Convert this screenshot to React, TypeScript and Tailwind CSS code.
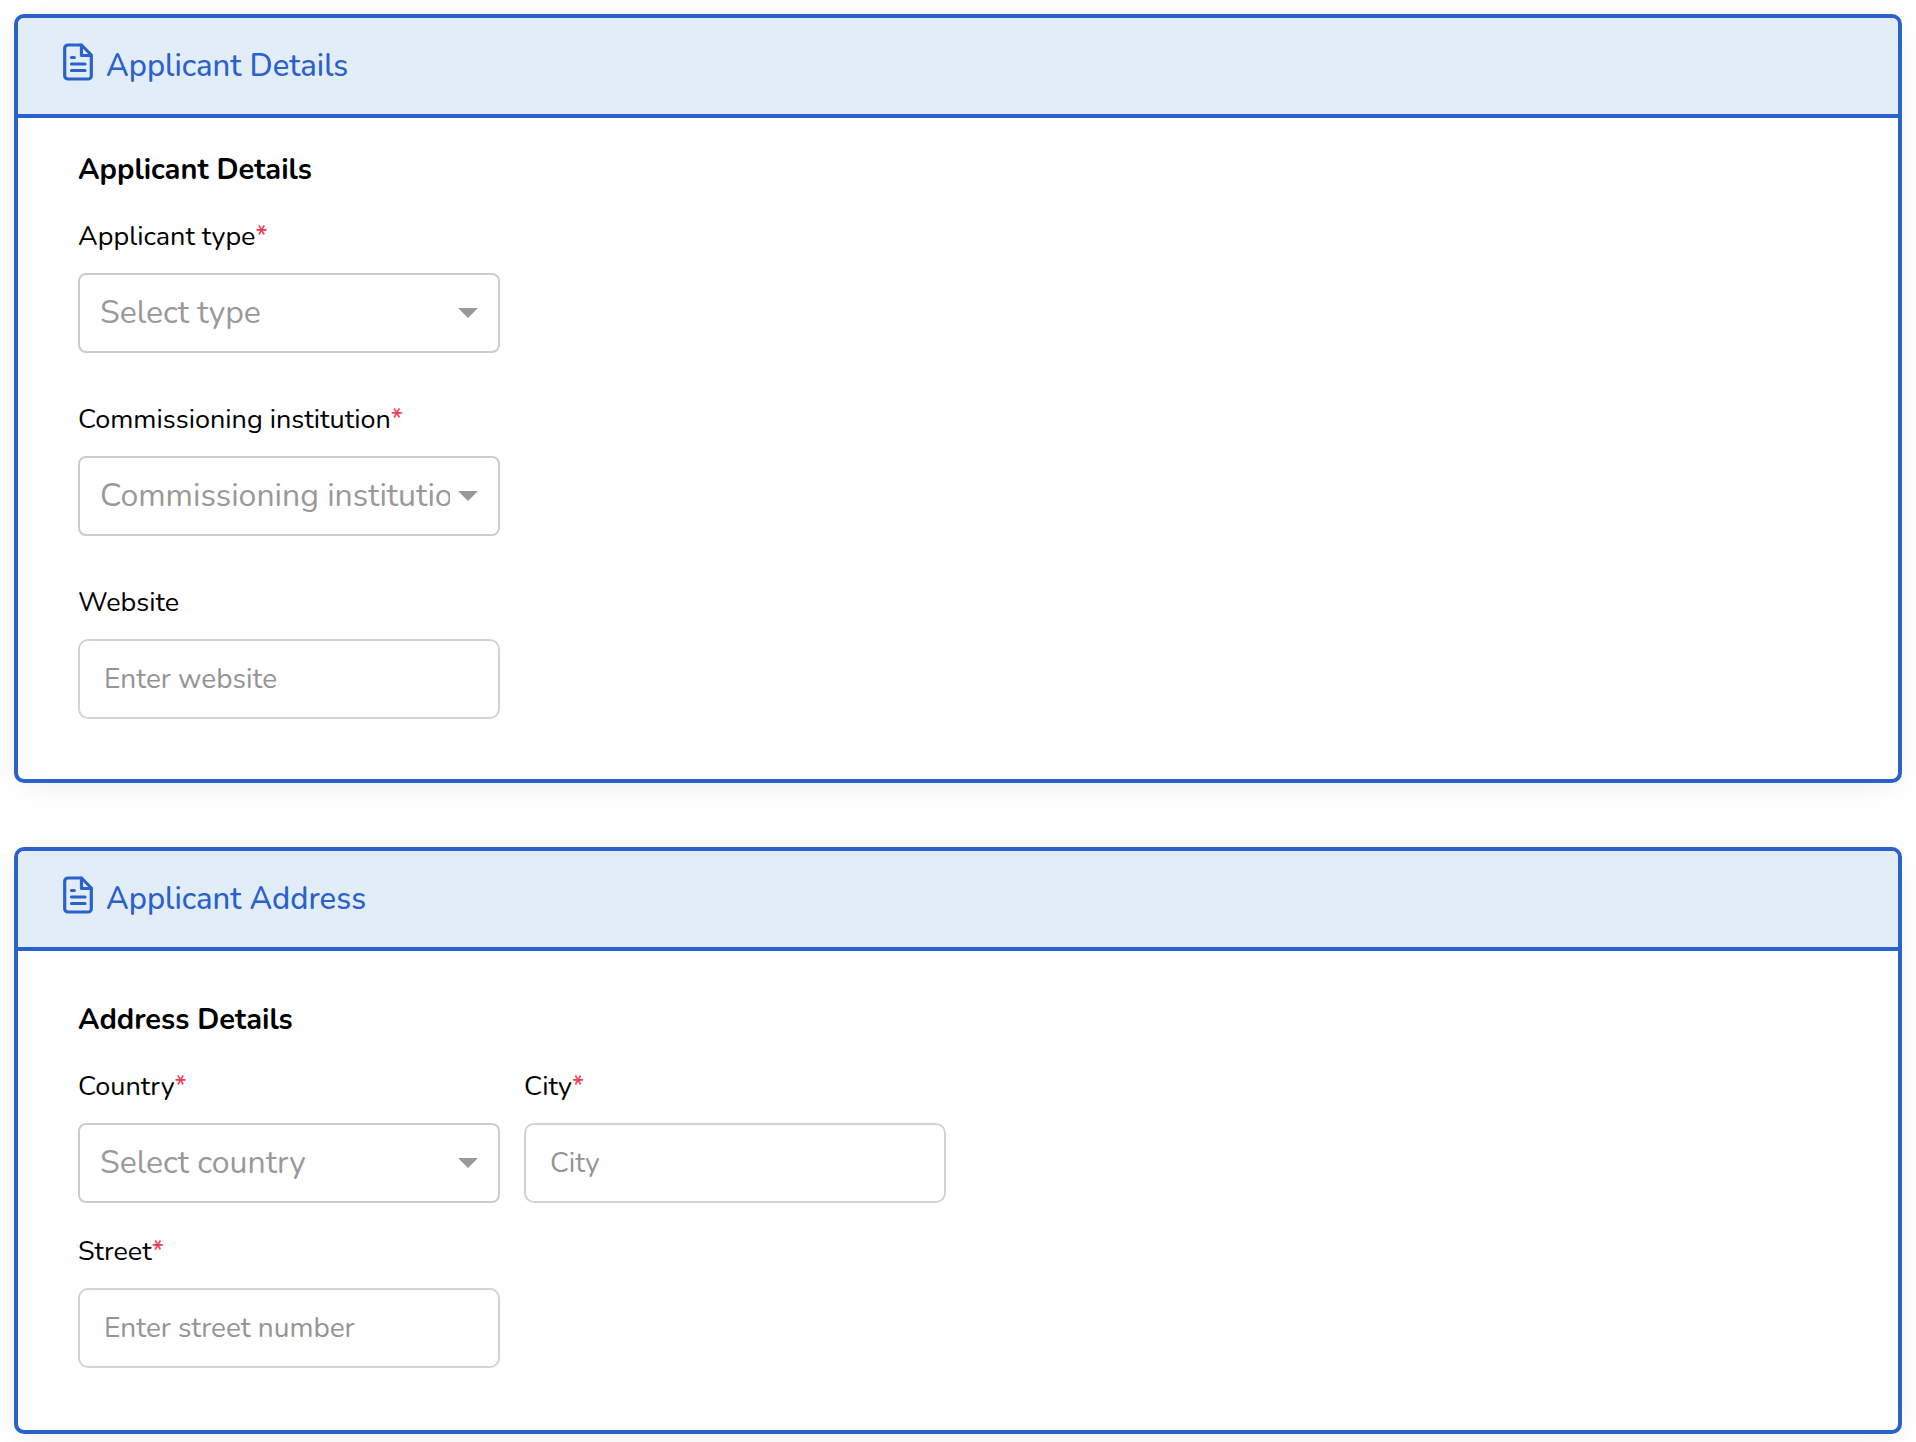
import { useId } from "react";
import type { ReactNode } from "react";

interface FieldProps {
  label: string;
  placeholder: string;
  required?: boolean;
}

function FileIcon() {
  return (
    <svg width="32" height="40" viewBox="0 0 32 40" fill="none" stroke="currentColor" strokeWidth="3.2" strokeLinecap="round" strokeLinejoin="round" aria-hidden="true">
      <path d="M19.500 3H6a3.300 3.300 0 0 0-3.300 3.300v27.400A3.300 3.300 0 0 0 6 37h20a3.300 3.300 0 0 0 3.300-3.300V13z" />
      <path d="M19.500 3v10.500h9.500" />
      <path d="M9.500 15.500h2.800M9.500 22h13.500M9.500 28.500h13.500" />
    </svg>
  );
}

function FieldLabel({ id, label, required }: { id: string; label: string; required?: boolean }) {
  return (
    <label htmlFor={id} className="mb-4 text-[27px] leading-10 text-black">
      {label}
      {required && <span className="font-medium text-[#ef3e55]">*</span>}
    </label>
  );
}

function SelectField({ label, placeholder, required }: FieldProps) {
  const id = useId();

  return (
    <div className="flex w-[422px] max-w-full flex-col">
      <FieldLabel id={id} label={label} required={required} />
      <div className="relative">
        <select
          id={id}
          required={required}
          defaultValue=""
          className="h-20 w-full appearance-none rounded-lg border-2 border-[#ccc] bg-white pr-12 pl-5 text-[32px] text-[#999]"
        >
          <option value="">{placeholder}</option>
        </select>
        <svg className="pointer-events-none absolute top-[35px] right-[22px]" width="20" height="10" viewBox="0 0 20 10" fill="#999" aria-hidden="true">
          <path d="M0 0h20L10 10z" />
        </svg>
      </div>
    </div>
  );
}

function TextField({ label, placeholder, required }: FieldProps) {
  const id = useId();

  return (
    <div className="flex w-[422px] max-w-full flex-col">
      <FieldLabel id={id} label={label} required={required} />
      <input
        id={id}
        type="text"
        required={required}
        placeholder={placeholder}
        className="h-20 w-full rounded-[10px] border-2 border-[#ced4da] bg-white px-6 text-[28px] placeholder:text-[#949494]"
      />
    </div>
  );
}

function Card({ title, children }: { title: string; children: ReactNode }) {
  return (
    <section className="overflow-hidden rounded-[10px] border-4 border-[#2962cc] bg-white shadow-[0_6px_32px_-8px_rgba(0,0,0,0.1)]">
      <header className="flex h-[100px] items-center gap-3 border-b-4 border-[#2962cc] bg-[#e3edf7] pl-11 text-[#2962cc]">
        <span className="pb-2">
          <FileIcon />
        </span>
        <h2 className="text-[31px] leading-10 font-medium">{title}</h2>
      </header>
      {children}
    </section>
  );
}

export default function App() {
  return (
    <main className="flex flex-col gap-16 bg-white p-3.5 font-['Nunito','Lato',sans-serif]">
      <Card title="Applicant Details">
        <div className="px-15 pt-8 pb-15">
          <h3 className="mb-[27px] text-[29px] leading-10 font-bold text-black">Applicant Details</h3>
          <div className="flex flex-col gap-[47px]">
            <SelectField label="Applicant type" placeholder="Select type" required />
            <SelectField label="Commissioning institution" placeholder="Commissioning institution" required />
            <TextField label="Website" placeholder="Enter website" />
          </div>
        </div>
      </Card>

      <Card title="Applicant Address">
        <div className="px-15 pt-[49px] pb-[62px]">
          <h3 className="mb-[27px] text-[29px] leading-10 font-bold text-black">Address Details</h3>
          <div className="flex flex-col gap-[29px]">
            <div className="flex flex-wrap gap-6">
              <SelectField label="Country" placeholder="Select country" required />
              <TextField label="City" placeholder="City" required />
            </div>
            <TextField label="Street" placeholder="Enter street number" required />
          </div>
        </div>
      </Card>
    </main>
  );
}
